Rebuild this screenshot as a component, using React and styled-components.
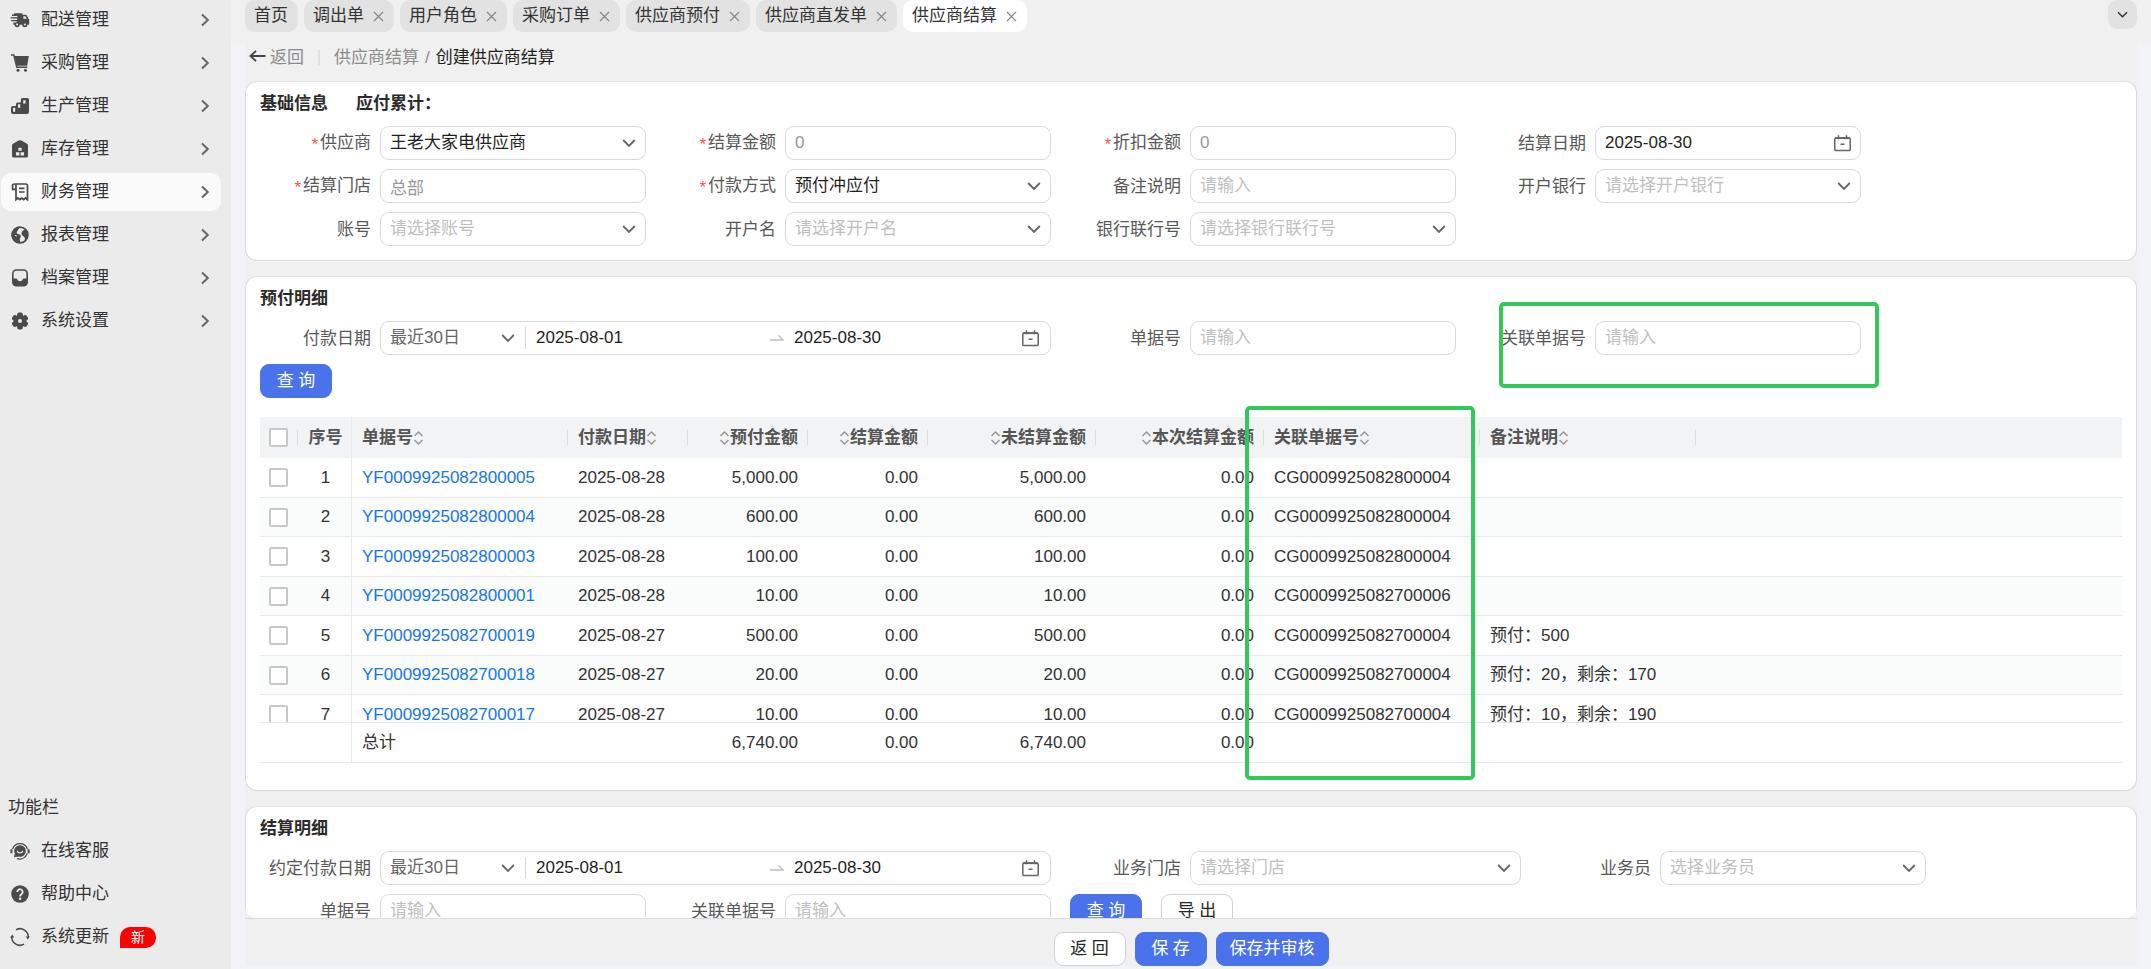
import React from "react";
import styled, { createGlobalStyle, css } from "styled-components";

const GlobalStyle = createGlobalStyle`
  *, *::before, *::after { box-sizing: border-box; }
  body {
    margin: 0;
    background: #f1f3f6;
    color: #333;
    font: 17px/24px "Liberation Sans", "Noto Sans CJK SC", sans-serif;
  }
  button, input, select { font: inherit; color: inherit; margin: 0; }
`;

/* ---------- page frame ---------- */

const Page = styled.div`
  display: flex;
  height: 100vh;
  overflow: hidden;
`;

const Sidebar = styled.nav`
  flex: none;
  display: flex;
  flex-direction: column;
  gap: 5px;
  width: 231px;
  padding: 1px 10px 13px 1px;
  background: #ebebeb;
`;

const NavItem = styled.button`
  flex: none;
  display: flex;
  align-items: center;
  gap: 11px;
  height: 38px;
  padding: 0 11px 0 9px;
  border: 0;
  border-radius: 10px;
  background: ${(p) => (p.$active ? "#fafafa" : "transparent")};
  color: #333;
  text-align: left;
  cursor: pointer;

  > svg { flex: none; color: #4a4a4a; }
  > svg:last-child:not(:first-child) { margin-left: auto; color: #666; }
`;

const SidebarHeading = styled.div`
  margin-top: auto;
  padding-left: 7px;
  line-height: 38px;
`;

const NewBadge = styled.span`
  width: 36px;
  height: 21px;
  border-radius: 10px 10px 10px 0;
  background: #ff0000;
  color: #fff;
  font-size: 14px;
  line-height: 21px;
  text-align: center;
`;

const Main = styled.main`
  flex: 1;
  min-width: 0;
  display: flex;
  flex-direction: column;
`;

const TabBar = styled.div`
  flex: none;
  display: flex;
  align-items: flex-start;
  justify-content: space-between;
  height: 43px;
  padding: 0 14px;
  background: #f0f0f0;
`;

const TabList = styled.div`
  display: flex;
  gap: 6px;
`;

const Tab = styled.div`
  display: flex;
  align-items: center;
  gap: 9px;
  height: 32px;
  padding: 0 10px 0 9px;
  border-radius: 10px;
  background: ${(p) => (p.$active ? "#fff" : "#e2e2e2")};
  white-space: nowrap;
`;

const TabClose = styled.button`
  display: flex;
  padding: 0;
  border: 0;
  background: none;
  color: #888;
  cursor: pointer;
`;

const TabMenu = styled.button`
  display: flex;
  align-items: center;
  justify-content: center;
  width: 29px;
  height: 29px;
  padding: 0;
  border: 0;
  border-radius: 9px;
  background: #e2e2e2;
  color: #333;
`;

const Workspace = styled.div`
  flex: 1;
  min-height: 0;
  display: flex;
  flex-direction: column;
  margin: 0 14px 3px;
  background: #f0f0f0;
`;

const Crumbs = styled.div`
  flex: none;
  display: flex;
  align-items: center;
  height: 38px;
  padding: 0 4px 9px;
  color: #8c8c8c;
`;

const BackLink = styled.a`
  display: flex;
  align-items: center;
  gap: 4px;
  color: #8c8c8c;
  text-decoration: none;
  svg { color: #444; }
`;

const CrumbRule = styled.span`
  width: 2px;
  height: 16px;
  margin: 0 14px;
  background: #e0e0e0;
`;

const CrumbLink = styled.a`
  color: #8c8c8c;
  text-decoration: none;
`;

const CrumbSlash = styled.span`
  margin: 0 6px;
`;

const CrumbCurrent = styled.span`
  color: #1f1f1f;
`;

const ScrollArea = styled.div`
  flex: 1;
  min-height: 0;
  display: flex;
  flex-direction: column;
  gap: 15px;
  overflow: hidden;
  border-radius: 0 0 12px 12px;
`;

const FooterBar = styled.footer`
  flex: none;
  display: flex;
  justify-content: center;
  gap: 9px;
  padding-top: 13px;
  border-top: 1px solid #dcdcdc;
`;

/* ---------- cards and forms ---------- */

const Card = styled.section`
  flex: none;
  padding: 10px 14px ${(p) => p.$bottom}px;
  border: 1px solid #d9d9d9;
  border-top-color: #e2e2e2;
  border-radius: 12px;
  background: #fff;
`;

const CardHead = styled.div`
  display: flex;
  gap: 28px;
  margin-bottom: 10px;
`;

const CardTitle = styled.h2`
  margin: 0;
  font-size: 17px;
  line-height: 24px;
  font-weight: 700;
  color: #2b2b2b;
`;

const FormGrid = styled.div`
  display: flex;
  flex-wrap: wrap;
  gap: 9px 19px;
`;

const FormItem = styled.div`
  position: relative;
  display: flex;
  align-items: center;
`;

const FieldLabel = styled.label`
  display: flex;
  justify-content: flex-end;
  width: 120px;
  padding: 2px 9px 0 0;
  color: #595959;
  white-space: nowrap;
`;

const Required = styled.span`
  padding-top: 3px;
  font-family: "Liberation Mono", monospace;
  color: #ff4d4f;
`;

const fieldBox = css`
  height: 34px;
  border: 1px solid #d9d9d9;
  border-radius: 9px;
  background: #fff;
`;

const FieldWrap = styled.div`
  position: relative;
  width: ${(p) => (p.$wide ? 331 : 266)}px;

  > svg {
    position: absolute;
    top: 0;
    bottom: 0;
    right: 10px;
    margin: auto 0;
    color: #666;
    pointer-events: none;
  }
`;

const TextField = styled.input`
  ${fieldBox}
  display: block;
  width: 100%;
  padding: 0 9px;
  color: ${(p) => (p.$muted ? "#999" : "#1f1f1f")};
  outline: none;
  &::placeholder { color: #bfbfbf; opacity: 1; }
`;

const SelectField = styled.select`
  ${fieldBox}
  display: block;
  width: 100%;
  padding: 0 30px 0 9px;
  appearance: none;
  color: ${(p) => (p.$empty ? "#bfbfbf" : "#1f1f1f")};
  outline: none;
`;

const RangeBox = styled.div`
  ${fieldBox}
  display: flex;
  align-items: center;
  width: 671px;
  padding-right: 11px;
  > svg { flex: none; color: #666; }
`;

const RangePreset = styled.div`
  flex: none;
  position: relative;
  width: 145px;
  border-right: 1px solid #d9d9d9;
  svg {
    position: absolute;
    top: 0;
    bottom: 0;
    right: 10px;
    margin: auto 0;
    color: #666;
    pointer-events: none;
  }
`;

const PresetSelect = styled.select`
  display: block;
  width: 100%;
  height: 22px;
  padding: 0 0 0 9px;
  border: 0;
  background: none;
  appearance: none;
  line-height: 22px;
  color: #666;
  outline: none;
`;

const RangeInput = styled.input`
  flex: ${(p) => (p.$end ? "0 0 238px" : "1")};
  min-width: 0;
  height: 30px;
  padding: 0 10px;
  border: 0;
  background: none;
  color: #1f1f1f;
  outline: none;
`;

const Button = styled.button`
  flex: none;
  min-width: 72px;
  height: 34px;
  padding: 0 13px;
  border: 1px solid ${(p) => (p.$primary ? "#4a73eb" : "#d0d0d0")};
  border-radius: 9px;
  background: ${(p) => (p.$primary ? "#4a73eb" : "#fff")};
  color: ${(p) => (p.$primary ? "#fff" : "#262626")};
  line-height: 32px;
  white-space: nowrap;
  cursor: pointer;
`;

const ButtonRow = styled.div`
  display: flex;
  margin-top: 9px;
`;

/* ---------- table ---------- */

const TableWrap = styled.div`
  position: relative;
  margin-top: 19px;
`;

const TableViewport = styled.div`
  height: 346px;
  overflow: hidden;
`;

const Table = styled.table`
  width: 100%;
  table-layout: fixed;
  border-collapse: separate;
  border-spacing: 0;

  th, td { padding: 0 10px; white-space: nowrap; }
  thead th {
    height: 41px;
    background: #f2f3f5;
    color: #555;
    font-weight: 700;
  }
  tbody td { height: 40px; border-bottom: 1px solid #e8eaea; background: #fff; }
  tbody tr:nth-child(even) td { height: 39px; background: #fafcfb; }
  tfoot { position: sticky; bottom: 0; }
  tfoot td {
    height: 41px;
    background: #fff;
    border-top: 1px solid #e8eaea;
    border-bottom: 1px solid #e8eaea;
  }
  tr > :nth-child(1) { padding: 0; text-align: center; }
  td:nth-child(1) { padding-right: 1px; }
  tr > :nth-child(2) { padding: 0 0 0 2px; text-align: center; border-right: 1px solid #e8eaec; }
`;

const HeadInner = styled.div`
  display: flex;
  align-items: center;
  justify-content: ${(p) =>
    p.$align === "right" ? "flex-end" : p.$align === "center" ? "center" : "flex-start"};
  height: 15px;
  margin-right: ${(p) => (p.$flush ? 0 : -10)}px;
  padding-right: ${(p) => (p.$flush ? 0 : 9)}px;
  border-right: 1px solid #dcdee0;
`;

const Cell = styled.td`
  text-align: ${(p) => p.$align || "left"};
`;

const DocLink = styled.a`
  color: #1677e8;
  text-decoration: none;
`;

const Check = styled.input`
  display: block;
  width: 19px;
  height: 19px;
  margin: 0 auto;
  appearance: none;
  border: 2px solid #c8c8c8;
  border-radius: 2px;
  background: #fff;
`;

/* highlight frame laid over a field or a column */
const Highlight = styled.div`
  position: absolute;
  top: ${(p) => p.$top}px;
  left: ${(p) => p.$left}px;
  width: ${(p) => p.$width}px;
  height: ${(p) => p.$height}px;
  border: 4px solid #34c759;
  border-radius: 5px;
  pointer-events: none;
`;

/* ---------- icons ---------- */

const Svg = ({ size = 20, w, h, children, ...rest }) => (
  <svg width={w || size} height={h || size} viewBox="0 0 20 20" fill="none" aria-hidden="true" {...rest}>
    {children}
  </svg>
);

const TruckIcon = () => (
  <Svg>
    <path d="M4 3.200h8.400v1.600h2.900c.9 0 1.500.4 1.900 1.200l1 2.200 1 1.400v4.200c0 .6-.4 1-1 1h-.9a2.500 2.500 0 0 1-5 0H9.600a2.500 2.500 0 0 1-5 0H3.400v-2.300h3.200v-1.200H1.200V9.900h6V8.600H.6V7.200h6.800V6H2V4.600h2z" fill="currentColor" />
    <path d="M13.400 6.300h2l1.300 2.500h-3.300z" fill="#ebebeb" />
    <circle cx="7.100" cy="14.600" r="1" fill="#ebebeb" />
    <circle cx="14.800" cy="14.600" r="1" fill="#ebebeb" />
  </Svg>
);
const CartIcon = () => (
  <Svg>
    <path d="M1 2h2.800l3 12.200h10.500" stroke="currentColor" strokeWidth="1.500" />
    <path d="M4.500 3h14.300l-1.600 9.800H6.800z" fill="currentColor" />
    <circle cx="8" cy="17.200" r="1.500" fill="currentColor" />
    <circle cx="15.500" cy="17.200" r="1.500" fill="currentColor" />
  </Svg>
);
const StepsIcon = () => (
  <Svg>
    <path d="M3 10h3V8a1.500 1.500 0 0 1 1.500-1.500h3.300V3.800A1.800 1.800 0 0 1 12.600 2h4.600A1.800 1.800 0 0 1 19 3.800V16a2 2 0 0 1-2 2H3a2 2 0 0 1-2-2v-4a2 2 0 0 1 2-2z" fill="currentColor" />
    <path d="M3 11.800h2.200v4H3zM8 8.200h2.200v3.600H8zM13.200 4.200h2.400v3.400h-2.400z" fill="#ebebeb" />
  </Svg>
);
const HouseIcon = () => (
  <Svg>
    <path d="M8.600 1.500a3 3 0 0 1 2.800 0l5.600 3.200a2 2 0 0 1 1 1.800V17a1.600 1.600 0 0 1-1.600 1.600H3.600A1.600 1.600 0 0 1 2 17V6.500a2 2 0 0 1 1-1.800z" fill="currentColor" />
    <path d="M8.400 8.800h3.200v3H8.400zM6 13.200h3.400v3.400H6zM10.600 13.200H14v3.400h-3.400z" fill="#ebebeb" />
  </Svg>
);
const ReceiptIcon = () => (
  <Svg stroke="currentColor" strokeWidth="1.700">
    <path d="M6 17.600V3.600A1.700 1.700 0 0 0 4.300 2h11.500A1.700 1.700 0 0 1 17.500 3.700v14l-2-1.700-1.900 1.700-1.900-1.700-1.900 1.700-1.900-1.700z" />
    <path d="M4.300 2A1.600 1.600 0 0 0 2.600 3.700V7.300H6M9 6.400h5.500M9 10h5.500" />
  </Svg>
);
const GlobeIcon = () => (
  <Svg>
    <circle cx="10" cy="10" r="7.900" stroke="currentColor" strokeWidth="1.600" />
    <path d="M10.600 1.800C9 3.600 7 4.600 6.200 7c-.4 1.500 1 2.200 2.600 2.300 1.700.1 2 .9 1.900 2 0 1.300-1 2-.9 3.200l.5 3.700C5 18.300 1.600 14.600 1.600 10c0-1 .2-2 .5-2.800L6 12.200l.8-1.400-2.600-2.600C4.600 4.500 7 2 10.600 1.800z" fill="currentColor" />
    <path d="M2 7.500 6.500 12l.3 5.300C3.500 16 1.600 13 1.600 10zM2.600 6.500C4 3.500 7 1.600 10 1.600L6.500 7.600 8 10H4z" fill="currentColor" />
    <path d="M13.200 5.600l2.600-1.400C17.500 5.800 18.300 8 18.300 10c-.1 3.200-1.600 5.400-3.800 6.800l.4-3c.1-1.400-.6-2-1.600-2.600-1.300-.8-2-1.800-1.700-3.200.1-1.200.8-1.900 1.600-2.400z" fill="currentColor" />
  </Svg>
);
const InboxIcon = () => (
  <Svg>
    <rect x="2.800" y="2" width="14.400" height="15.600" rx="3.500" stroke="currentColor" strokeWidth="1.600" />
    <path d="M2.800 10.600h3.600c.8 0 .9 2.600 3.600 2.600s2.800-2.600 3.600-2.600h3.600v4a3 3 0 0 1-3 3H5.800a3 3 0 0 1-3-3z" fill="currentColor" />
  </Svg>
);
const GearIcon = () => (
  <Svg>
    <g fill="currentColor">
      <circle cx="10" cy="10" r="6.400" />
      {[0, 60, 120].map((a) => (
        <rect key={a} x="7.200" y="1.500" width="5.600" height="17" rx="1.800" transform={`rotate(${a} 10 10)`} />
      ))}
    </g>
    <circle cx="10" cy="10" r="2" fill="#ebebeb" />
  </Svg>
);
const ServiceIcon = () => (
  <Svg stroke="currentColor" strokeWidth="1.300">
    <path d="M2.600 8a7.800 7.800 0 0 1 14.800 0M7 17.700c4 1.200 8.300-.5 10.400-5.500" />
    <path d="M1.400 8.300v4M18.600 8.300v4" strokeWidth="2" />
    <circle cx="10" cy="10" r="5.200" fill="currentColor" />
    <path d="M7.200 9.800a2.900 2.900 0 0 0 5.600 0" stroke="#ebebeb" />
    <path d="M5 14l-.2 1.500 2-.3z" fill="currentColor" />
  </Svg>
);
const HelpIcon = () => (
  <Svg>
    <circle cx="10" cy="10" r="8.800" fill="currentColor" />
    <path d="M7.300 8a2.700 2.700 0 1 1 4.300 2.100c-1 .8-1.500 1.100-1.500 2.300" stroke="#ebebeb" strokeWidth="1.800" />
    <circle cx="10.100" cy="14.700" r="1.200" fill="#ebebeb" />
  </Svg>
);
const RefreshIcon = () => (
  <Svg stroke="currentColor" strokeWidth="1.500">
    <path d="M6 2.800a8.200 8.200 0 0 1 12.200 8M14 17.200A8.200 8.200 0 0 1 1.800 9.200" />
    <path d="M15.700 9.600h4.200l-2.100 3zM.1 10.400h4.200l-2.100-3z" fill="currentColor" stroke="none" />
  </Svg>
);
const ChevronRight = () => (
  <Svg w={10} h={14} viewBox="0 0 10 14" stroke="currentColor" strokeWidth="2">
    <path d="M2 1.500 7.800 7 2 12.500" />
  </Svg>
);
const ChevronDown = ({ size = 14 }) => (
  <Svg size={size} viewBox="0 0 14 14" stroke="currentColor" strokeWidth="1.800">
    <path d="M1.200 4 7 10l5.800-6" />
  </Svg>
);
const CloseIcon = () => (
  <Svg size={11} viewBox="0 0 11 11" stroke="currentColor" strokeWidth="1.200">
    <path d="M1 1l9 9M10 1l-9 9" />
  </Svg>
);
const ArrowLeft = () => (
  <Svg w={17} h={16} viewBox="0 0 17 16" stroke="currentColor" strokeWidth="1.800">
    <path d="M16.500 6H1.500M7 .8 1.500 6 7 11.200" />
  </Svg>
);
const CalendarIcon = () => (
  <Svg w={17} h={18} viewBox="0 0 17 18" stroke="currentColor" strokeWidth="1.500">
    <rect x=".8" y="4" width="15.400" height="12.600" rx="1.200" />
    <path d="M1 4.200h15" strokeWidth="1.800" />
    <path d="M4.500 1.200v4M12.500 1.200v4M6.500 10.300h4" />
  </Svg>
);
const RangeArrow = () => (
  <Svg w={14} h={10} viewBox="0 0 14 10" strokeWidth="1.400">
    <path d="M0 7h13L8.500 2.500" stroke="#bfbfbf" />
  </Svg>
);
const SortIcon = () => (
  <Svg w={11} h={16} viewBox="0 0 11 16" stroke="#999" strokeWidth="1.500">
    <path d="M1.500 6 5.500 2l4 4M1.500 10l4 4 4-4" />
  </Svg>
);

/* ---------- data ---------- */

const navItems = [
  ["配送管理", TruckIcon],
  ["采购管理", CartIcon],
  ["生产管理", StepsIcon],
  ["库存管理", HouseIcon],
  ["财务管理", ReceiptIcon],
  ["报表管理", GlobeIcon],
  ["档案管理", InboxIcon],
  ["系统设置", GearIcon],
];

const tabs = ["首页", "调出单", "用户角色", "采购订单", "供应商预付", "供应商直发单", "供应商结算"];

const columns = [
  { label: "单据号", width: 216 },
  { label: "付款日期", width: 120 },
  { label: "预付金额", width: 120, align: "right" },
  { label: "结算金额", width: 120, align: "right" },
  { label: "未结算金额", width: 168, align: "right" },
  { label: "本次结算金额", width: 168, align: "right" },
  { label: "关联单据号", width: 216 },
  { label: "备注说明", width: 216 },
];

const rows = [
  ["YF0009925082800005", "2025-08-28", "5,000.00", "0.00", "5,000.00", "0.00", "CG0009925082800004", ""],
  ["YF0009925082800004", "2025-08-28", "600.00", "0.00", "600.00", "0.00", "CG0009925082800004", ""],
  ["YF0009925082800003", "2025-08-28", "100.00", "0.00", "100.00", "0.00", "CG0009925082800004", ""],
  ["YF0009925082800001", "2025-08-28", "10.00", "0.00", "10.00", "0.00", "CG0009925082700006", ""],
  ["YF0009925082700019", "2025-08-27", "500.00", "0.00", "500.00", "0.00", "CG0009925082700004", "预付：500"],
  ["YF0009925082700018", "2025-08-27", "20.00", "0.00", "20.00", "0.00", "CG0009925082700004", "预付：20，剩余：170"],
  ["YF0009925082700017", "2025-08-27", "10.00", "0.00", "10.00", "0.00", "CG0009925082700004", "预付：10，剩余：190"],
];

const totals = ["总计", "", "6,740.00", "0.00", "6,740.00", "0.00", "", ""];

/* ---------- composed parts ---------- */

function Item({ id, label, required, children }) {
  return (
    <FormItem>
      <FieldLabel htmlFor={id}>
        {required && <Required>*</Required>}
        {label}
      </FieldLabel>
      {children}
    </FormItem>
  );
}

function TextItem({ id, label, required, value, placeholder, muted, calendar, highlight }) {
  return (
    <Item id={id} label={label} required={required}>
      <FieldWrap>
        <TextField id={id} type="text" defaultValue={value} placeholder={placeholder} $muted={muted} />
        {calendar && <CalendarIcon />}
      </FieldWrap>
      {highlight}
    </Item>
  );
}

function SelectItem({ id, label, required, value, placeholder, wide }) {
  return (
    <Item id={id} label={label} required={required}>
      <FieldWrap $wide={wide}>
        <SelectField id={id} $empty={!value}>
          <option>{value || placeholder}</option>
        </SelectField>
        <ChevronDown />
      </FieldWrap>
    </Item>
  );
}

function RangeItem({ id, label }) {
  return (
    <Item id={id} label={label}>
      <RangeBox>
        <RangePreset>
          <PresetSelect aria-label={`${label}范围`}>
            <option>最近30日</option>
          </PresetSelect>
          <ChevronDown />
        </RangePreset>
        <RangeInput id={id} type="text" defaultValue="2025-08-01" />
        <RangeArrow />
        <RangeInput $end type="text" aria-label={`${label}截止`} defaultValue="2025-08-30" />
        <CalendarIcon />
      </RangeBox>
    </Item>
  );
}

function PrepayTable() {
  return (
    <TableWrap>
      <TableViewport>
        <Table>
          <colgroup>
            <col style={{ width: 38 }} />
            <col style={{ width: 54 }} />
            {columns.map((c) => (
              <col key={c.label} style={{ width: c.width }} />
            ))}
            <col />
          </colgroup>
          <thead>
            <tr>
              <th>
                <HeadInner $flush $align="center">
                  <Check type="checkbox" aria-label="全选" />
                </HeadInner>
              </th>
              <th>序号</th>
              {columns.map((c) => (
                <th key={c.label}>
                  <HeadInner $align={c.align}>
                    {c.align === "right" && <SortIcon />}
                    {c.label}
                    {c.align !== "right" && <SortIcon />}
                  </HeadInner>
                </th>
              ))}
              <th />
            </tr>
          </thead>
          <tbody>
            {rows.map((row, i) => (
              <tr key={row[0]}>
                <td>
                  <Check type="checkbox" aria-label={`选择 ${row[0]}`} />
                </td>
                <td>{i + 1}</td>
                {row.map((value, k) => (
                  <Cell key={k} $align={columns[k].align}>
                    {k === 0 ? <DocLink href="#">{value}</DocLink> : value}
                  </Cell>
                ))}
                <td />
              </tr>
            ))}
          </tbody>
          <tfoot>
            <tr>
              <td />
              <td />
              {totals.map((value, k) => (
                <Cell key={k} $align={columns[k].align}>{value}</Cell>
              ))}
              <td />
            </tr>
          </tfoot>
        </Table>
      </TableViewport>
      <Highlight $top={-11} $left={985} $width={230} $height={374} />
    </TableWrap>
  );
}

export default function App() {
  return (
    <Page lang="zh-CN">
      <GlobalStyle />
      <Sidebar>
        {navItems.map(([label, Icon]) => (
          <NavItem key={label} type="button" $active={label === "财务管理"}>
            <Icon />
            {label}
            <ChevronRight />
          </NavItem>
        ))}
        <SidebarHeading>功能栏</SidebarHeading>
        <NavItem type="button"><ServiceIcon />在线客服</NavItem>
        <NavItem type="button"><HelpIcon />帮助中心</NavItem>
        <NavItem type="button"><RefreshIcon />系统更新<NewBadge>新</NewBadge></NavItem>
      </Sidebar>

      <Main>
        <TabBar>
          <TabList>
            {tabs.map((label, i) => (
              <Tab key={label} $active={label === "供应商结算"}>
                {label}
                {i > 0 && (
                  <TabClose type="button" aria-label={`关闭${label}`}>
                    <CloseIcon />
                  </TabClose>
                )}
              </Tab>
            ))}
          </TabList>
          <TabMenu type="button" aria-label="更多标签">
            <ChevronDown size={11} />
          </TabMenu>
        </TabBar>

        <Workspace>
          <Crumbs>
            <BackLink href="#"><ArrowLeft />返回</BackLink>
            <CrumbRule />
            <CrumbLink href="#">供应商结算</CrumbLink>
            <CrumbSlash>/</CrumbSlash>
            <CrumbCurrent>创建供应商结算</CrumbCurrent>
          </Crumbs>

          <ScrollArea>
            <Card $bottom={14}>
              <CardHead>
                <CardTitle>基础信息</CardTitle>
                <CardTitle>应付累计：</CardTitle>
              </CardHead>
              <FormGrid>
                <SelectItem id="supplier" label="供应商" required value="王老大家电供应商" />
                <TextItem id="amount" label="结算金额" required value="0" muted />
                <TextItem id="discount" label="折扣金额" required value="0" muted />
                <TextItem id="settle-date" label="结算日期" value="2025-08-30" calendar />
                <TextItem id="store" label="结算门店" required value="总部" muted />
                <SelectItem id="pay-way" label="付款方式" required value="预付冲应付" />
                <TextItem id="remark" label="备注说明" placeholder="请输入" />
                <SelectItem id="bank" label="开户银行" placeholder="请选择开户银行" />
                <SelectItem id="account" label="账号" placeholder="请选择账号" />
                <SelectItem id="account-name" label="开户名" placeholder="请选择开户名" />
                <SelectItem id="bank-code" label="银行联行号" placeholder="请选择银行联行号" />
              </FormGrid>
            </Card>

            <Card $bottom={27}>
              <CardHead>
                <CardTitle>预付明细</CardTitle>
              </CardHead>
              <FormGrid>
                <RangeItem id="pay-date" label="付款日期" />
                <TextItem id="doc-no" label="单据号" placeholder="请输入" />
                <TextItem
                  id="linked-no"
                  label="关联单据号"
                  placeholder="请输入"
                  highlight={<Highlight $top={-19} $left={24} $width={380} $height={86} />}
                />
              </FormGrid>
              <ButtonRow>
                <Button type="button" $primary>查 询</Button>
              </ButtonRow>
              <PrepayTable />
            </Card>

            <Card $bottom={27}>
              <CardHead>
                <CardTitle>结算明细</CardTitle>
              </CardHead>
              <FormGrid>
                <RangeItem id="due-date" label="约定付款日期" />
                <SelectItem id="biz-store" label="业务门店" placeholder="请选择门店" wide />
                <SelectItem id="salesman" label="业务员" placeholder="选择业务员" />
                <TextItem id="settle-no" label="单据号" placeholder="请输入" />
                <TextItem id="settle-linked" label="关联单据号" placeholder="请输入" />
                <Button type="button" $primary>查 询</Button>
                <Button type="button">导 出</Button>
              </FormGrid>
            </Card>
          </ScrollArea>

          <FooterBar>
            <Button type="button">返 回</Button>
            <Button type="button" $primary>保 存</Button>
            <Button type="button" $primary>保存并审核</Button>
          </FooterBar>
        </Workspace>
      </Main>
    </Page>
  );
}
